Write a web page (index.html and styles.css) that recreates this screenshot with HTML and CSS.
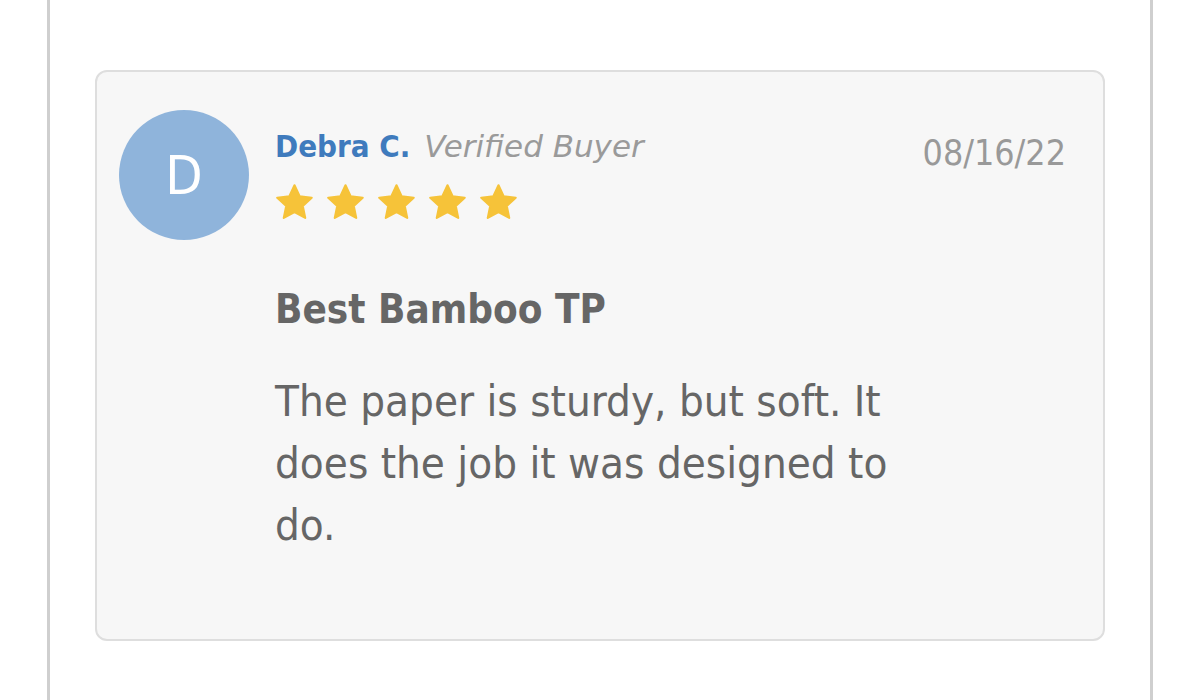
FILE: index.html
```html
<!DOCTYPE html>
<html>
<head>
<meta charset="utf-8">
<link rel="stylesheet" href="styles.css">
</head>
<body>
<div class="frame">
  <div class="card">
    <div class="avatar">D</div>
    <div class="content">
      <div class="head">
        <div class="who">
          <div class="names"><span class="name">Debra C.</span> <span class="verified">Verified Buyer</span></div>
          <div class="stars">
            <svg viewBox="1.4 1.3 21.2 19.9"><path d="M12 2l2.9 6.3 6.9.8-5.1 4.7 1.4 6.8L12 17.2l-6.1 3.4 1.4-6.8-5.1-4.7 6.9-.8z"/></svg>
            <svg viewBox="1.4 1.3 21.2 19.9"><path d="M12 2l2.9 6.3 6.9.8-5.1 4.7 1.4 6.8L12 17.2l-6.1 3.4 1.4-6.8-5.1-4.7 6.9-.8z"/></svg>
            <svg viewBox="1.4 1.3 21.2 19.9"><path d="M12 2l2.9 6.3 6.9.8-5.1 4.7 1.4 6.8L12 17.2l-6.1 3.4 1.4-6.8-5.1-4.7 6.9-.8z"/></svg>
            <svg viewBox="1.4 1.3 21.2 19.9"><path d="M12 2l2.9 6.3 6.9.8-5.1 4.7 1.4 6.8L12 17.2l-6.1 3.4 1.4-6.8-5.1-4.7 6.9-.8z"/></svg>
            <svg viewBox="1.4 1.3 21.2 19.9"><path d="M12 2l2.9 6.3 6.9.8-5.1 4.7 1.4 6.8L12 17.2l-6.1 3.4 1.4-6.8-5.1-4.7 6.9-.8z"/></svg>
          </div>
        </div>
        <div class="date">08/16/22</div>
      </div>
      <h3 class="title">Best Bamboo TP</h3>
      <p class="body">The paper is sturdy, but soft. It does the job it was designed to do.</p>
    </div>
  </div>
</div>
</body>
</html>
```
FILE: styles.css
```css
html, body { margin: 0; padding: 0; background: #fff; }
body { width: 1200px; height: 700px; overflow: hidden; font-family: "DejaVu Sans Condensed", "DejaVu Sans", sans-serif; }
.frame {
  box-sizing: border-box;
  margin-left: 47px;
  width: 1106px;
  height: 700px;
  border-left: 3px solid #cfcfcf;
  border-right: 3px solid #cfcfcf;
  padding: 70px 45px 0 45px;
}
.card {
  box-sizing: border-box;
  width: 1010px;
  height: 571px;
  background: #f7f7f7;
  border: 2px solid #dedede;
  border-radius: 12px;
  display: flex;
  padding: 38px 37px 0 22px;
  gap: 26px;
}
.avatar {
  flex: none;
  width: 130px; height: 130px;
  border-radius: 50%;
  background: #8fb4db;
  color: #fff;
  font-size: 54px;
  display: flex; align-items: center; justify-content: center;
}
.content { flex: 1; color: #666; }
.head { display: flex; justify-content: space-between; align-items: flex-start; }
.names { font-size: 31px; line-height: 36px; margin-top: 18px; white-space: nowrap; }
.name { color: #3f7bbd; font-weight: bold; }
.verified { color: #9a9a9a; font-style: italic; font-family: "DejaVu Sans", sans-serif; font-size: 31px; margin-left: 5px; }
.stars { display: flex; gap: 12px; margin-top: 20px; }
.stars svg { width: 39px; height: 35px; fill: #f6c339; stroke: #f6c339; stroke-width: 1.2; stroke-linejoin: round; }
.date { font-size: 35.5px; color: #999; margin-top: 23px; line-height: 40px; }
.title { font-size: 40px; font-weight: bold; margin: 68px 0 0; line-height: 44px; color: #666; }
.body { font-size: 43.5px; line-height: 62px; margin: 39px 0 0; max-width: 630px; }
```
